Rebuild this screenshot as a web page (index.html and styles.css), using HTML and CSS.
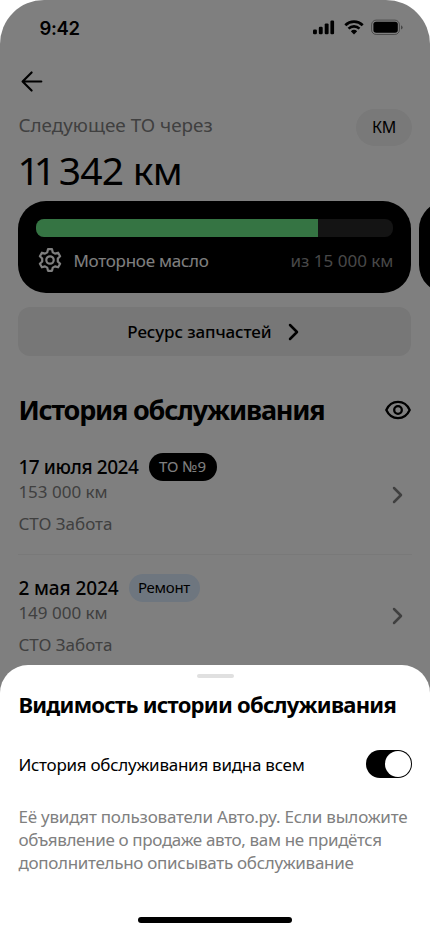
FILE: index.html
```html
<!DOCTYPE html>
<html lang="ru">
<head>
<meta charset="utf-8">
<meta name="viewport" content="width=device-width, initial-scale=1">
<title>История обслуживания</title>
<link rel="stylesheet" href="styles.css">
</head>
<body>
<div class="phone">
  <main class="screen">
    <header class="status">
      <span class="time">9:42</span>
      <div class="indicators">
        <svg width="22" height="15" viewBox="0 0 22 15"><rect x="0" y="9.5" width="3.9" height="4.8" rx="1.2"/><rect x="5.8" y="6.8" width="3.9" height="7.5" rx="1.2"/><rect x="11.7" y="3.4" width="3.9" height="10.9" rx="1.2"/><rect x="17.4" y="0.6" width="3.7" height="13.7" rx="1.2"/></svg>
        <svg class="wifi" width="20" height="15" viewBox="0 0 20 15"><path d="M1.3 5.2a12.6 12.6 0 0 1 17.4 0" fill="none" stroke="#000" stroke-width="2.8"/><path d="M4.5 8.6a8 8 0 0 1 11 0" fill="none" stroke="#000" stroke-width="2.6"/><path d="M6.8 11.2a4.8 4.8 0 0 1 6.4 0L10 14.4z"/></svg>
        <svg class="battery" width="33" height="17" viewBox="0 0 33 17"><rect x=".6" y="1.1" width="27.8" height="14.4" rx="4.6" fill="none" stroke="#000" stroke-opacity=".4"/><rect x="2.4" y="2.8" width="24.4" height="11" rx="2.8"/><path d="M30 6.2v4.4q1.7-.7 1.7-2.2T30 6.2z" opacity=".45"/></svg>
      </div>
    </header>
    <svg class="back" width="24" height="24" viewBox="0 0 24 24"><path d="M22.300 11.500H3.800M12.600 2.500l-9 9 9 9"/></svg>
    <section class="next">
      <div>
        <p class="next-label">Следующее ТО через</p>
        <p class="next-value"><span class="one">1</span><span class="one-last">1</span> 342 км</p>
      </div>
      <button class="unit">КМ</button>
    </section>
    <section class="cards">
      <article class="card">
        <div class="progress"><div class="progress-fill"></div></div>
        <div class="card-row">
          <svg class="gear" width="26" height="26" viewBox="0 0 26 26"><path d="M11 2.200h4l.8 3.200 2.200 1.200 3.100-.9 2 3.500-2.300 2.400v2.800l2.300 2.400-2 3.500-3.100-.9-2.200 1.200-.8 3.200h-4l-.8-3.200-2.200-1.200-3.100.9-2-3.500 2.300-2.400v-2.800L2.900 9.200l2-3.500 3.100.9 2.200-1.200z"/><circle cx="13" cy="13" r="3.700"/></svg>
          <span class="part">Моторное масло</span>
          <span class="limit">из 15 000 км</span>
        </div>
      </article>
      <article class="card"></article>
    </section>
    <button class="resource"><span>Ресурс запчастей</span><svg width="12" height="18" viewBox="0 0 12 18"><path d="m2 2 7 7-7 7"/></svg></button>
    <div class="history-head">
      <h1>История обслуживания</h1>
      <svg class="eye" width="26" height="20" viewBox="0 0 26 20"><path d="M1.300 10C3.500 5.200 7.700 1.900 13 1.900S22.500 5.200 24.700 10C22.500 14.800 18.300 18.100 13 18.100S3.500 14.800 1.300 10z"/><circle cx="13" cy="10" r="3.800"/></svg>
    </div>
    <article class="record">
      <div>
        <div class="record-top"><h2 class="date-first">17 июля 2024</h2><span class="tag tag-dark">ТО №9</span></div>
        <p class="mileage">153 000 км</p>
        <p class="place">СТО Забота</p>
      </div>
      <svg width="12" height="18" viewBox="0 0 12 18"><path d="m2 2 7 7-7 7"/></svg>
    </article>
    <article class="record">
      <div>
        <div class="record-top"><h2 class="date-second">2 мая 2024</h2><span class="tag tag-blue">Ремонт</span></div>
        <p class="mileage">149 000 км</p>
        <p class="place">СТО Забота</p>
      </div>
      <svg width="12" height="18" viewBox="0 0 12 18"><path d="m2 2 7 7-7 7"/></svg>
    </article>
  </main>
  <div class="shade"></div>
  <section class="sheet">
    <div class="handle"></div>
    <h2 class="sheet-title">Видимость истории обслуживания</h2>
    <div class="setting"><span>История обслуживания видна всем</span><div class="toggle"><div class="knob"></div></div></div>
    <p class="note"><span class="l1">Её увидят пользователи Авто.ру. Если выложите</span><br><span class="l2">объявление о продаже авто, вам не придётся</span><br><span class="l3">дополнительно описывать обслуживание</span></p>
    <div class="home"></div>
  </section>
</div>
</body>
</html>
```
FILE: styles.css
```css
* { box-sizing: border-box; }
body { margin: 0; background: #fff; font-family: "Noto Sans", "Open Sans", sans-serif; color: #000; }
h1, h2, p { margin: 0; white-space: nowrap; }
button { border: 0; padding: 0; font-family: inherit; color: #000; }
svg { display: block; flex: none; }
.phone { position: relative; width: 430px; height: 932px; overflow: hidden; border-radius: 44px 44px 0 0; }
.screen { height: 932px; padding: 0 18px 0 18.400px; background: #fff; }
.shade { position: absolute; inset: 0; background: rgba(0, 0, 0, .5); }

.status { display: flex; justify-content: space-between; height: 54px; padding: 17px 8px 0 21px; }
.time { font: 600 18.500px/22px Inter, sans-serif; letter-spacing: -.3px; }
.indicators { display: flex; padding-top: 2.500px; }
.wifi { margin-left: 9px; }
.battery { margin: -1px 0 0 7.500px; }
.back { margin: 16px 0 0 1px; fill: none; stroke: #000; stroke-width: 2.200; stroke-linecap: round; stroke-linejoin: round; }

.next { display: flex; justify-content: space-between; height: 107px; padding-top: 15px; }
.next-label { margin-top: -1px; font-size: 18.900px; line-height: 34px; color: #808080; }
.next-value { font-size: 39px; line-height: 56px; letter-spacing: -.8px; }
.one { margin-left: -1px; letter-spacing: -6px; }
.one-last { letter-spacing: -6.500px; }
.unit { width: 56px; height: 37px; border-radius: 19px; background: #f2f2f2; font-size: 16px; line-height: 37px; letter-spacing: -.3px; }

.cards { display: flex; gap: 8px; }
.card { flex: none; width: 393px; height: 92px; border-radius: 28px; background: #000; padding: 18px; }
.progress { height: 18px; border-radius: 8px; background: #282828; overflow: hidden; }
.progress-fill { width: 78.800%; height: 100%; background: #6ae887; }
.card-row { display: flex; align-items: center; height: 26px; margin-top: 10px; color: #fff; font-size: 17px; }
.gear { margin-left: 1px; fill: none; stroke: #fff; stroke-width: 2.200; stroke-linejoin: round; }
.part { margin-left: 10px; letter-spacing: -.25px; white-space: nowrap; }
.limit { margin-left: auto; color: #909090; white-space: nowrap; }

.resource { display: flex; align-items: center; justify-content: center; gap: 17px; width: 393px; height: 49px; margin-top: 14px; padding-right: 2px; border-radius: 12px; background: #efefef; font-size: 17px; font-weight: 500; letter-spacing: -.12px; }
.resource svg, .record svg { fill: none; stroke: #000; stroke-width: 2.500; stroke-linecap: round; stroke-linejoin: round; }
.history-head { display: flex; align-items: center; justify-content: space-between; height: 40px; margin-top: 34px; }
h1 { font-size: 27px; font-weight: 700; line-height: 40px; letter-spacing: -1.220px; }
.eye { margin-right: 1px; fill: none; stroke: #000; stroke-width: 2.300; stroke-linejoin: round; }

.record { display: flex; align-items: center; justify-content: space-between; height: 120px; padding: 2px 8px 0 0; }
.history-head + .record { height: 124px; padding-top: 5px; }
.record + .record { border-top: 1px solid #f2f2f2; }
.record svg { stroke: #808080; }
.record-top { display: flex; align-items: center; gap: 10px; height: 28px; }
.record h2 { font-size: 19px; font-weight: 500; line-height: 28px; }
.date-first { letter-spacing: -.42px; }
.date-second { letter-spacing: -.1px; }
.tag { height: 28px; border-radius: 14px; font-size: 15px; line-height: 27px; text-align: center; white-space: nowrap; }
.tag-dark { width: 68px; background: #000; color: #fff; }
.tag-blue { width: 71px; background: #dcecff; letter-spacing: -.3px; }
.mileage, .place { font-size: 17px; line-height: 24px; color: #808080; }
.mileage { margin-top: -1px; }
.place { margin-top: 8px; }

.sheet { position: absolute; left: 0; right: 0; bottom: 0; height: 267px; padding: 9px 18px 0 18.400px; border-radius: 28px 28px 0 0; background: #fff; }
.handle { width: 37px; height: 4px; margin: 0 auto; border-radius: 2px; background: #e0e0e0; }
.sheet-title { margin-top: 11px; font-size: 22px; font-weight: 700; line-height: 30px; letter-spacing: -.74px; }
.setting { display: flex; align-items: center; justify-content: space-between; height: 28px; margin-top: 31px; font-size: 17px; letter-spacing: -.26px; white-space: nowrap; }
.toggle { width: 46px; height: 28px; padding: 1px; border-radius: 14px; background: #000; }
.knob { width: 26px; height: 26px; margin-left: auto; border-radius: 50%; background: #fff; }
.note { margin-top: 27px; font-size: 17px; line-height: 23px; color: #808080; }
.l1 { letter-spacing: -.21px; }
.l2 { letter-spacing: -.34px; }
.l3 { letter-spacing: -.3px; }
.home { width: 154px; height: 6px; margin: 43px 0 0 119.600px; border-radius: 3px; background: #000; }
```
